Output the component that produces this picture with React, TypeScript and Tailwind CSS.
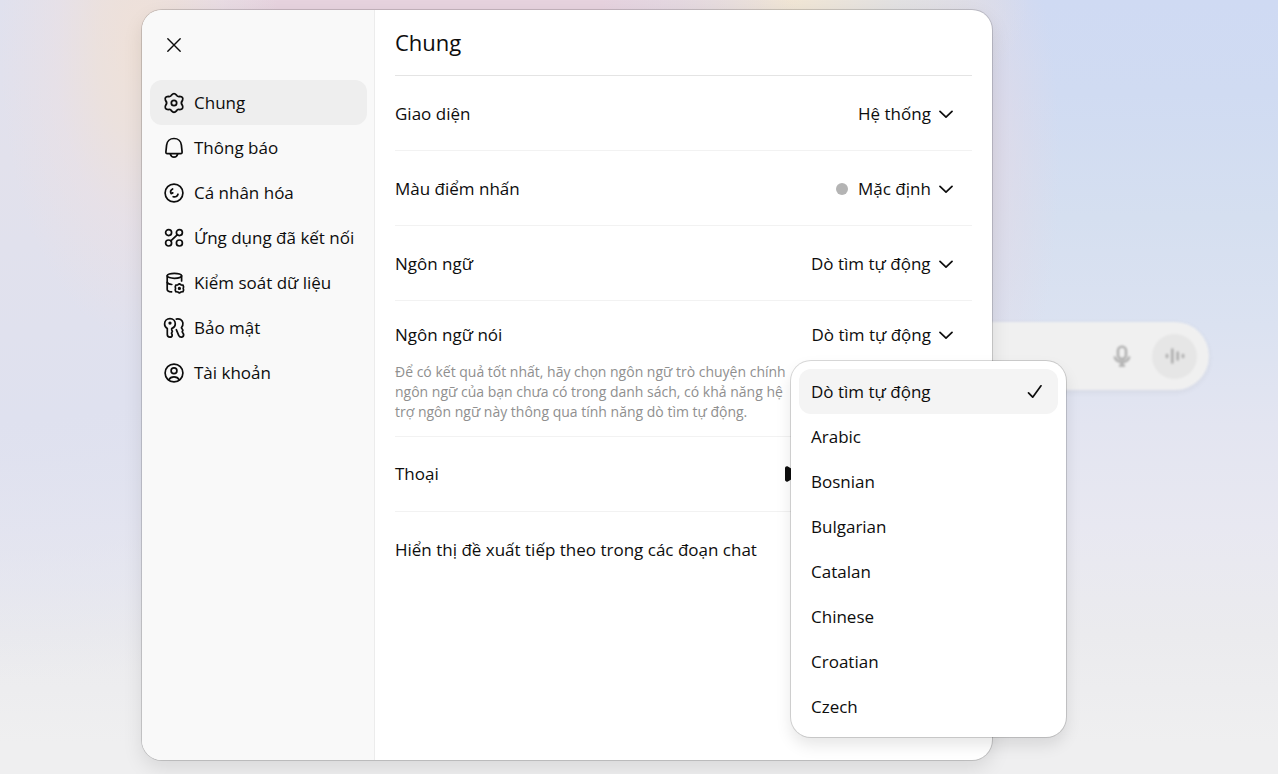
import { useState } from 'react';
import type { ReactNode } from 'react';

interface IconProps {
  children: ReactNode;
  viewBox?: string;
}

interface NavItem {
  id: string;
  label: string;
  icon: ReactNode;
}

interface SettingSelectProps {
  id: string;
  value: string;
}

const Icon = ({ children, viewBox = '0 0 24 24' }: IconProps) => (
  <svg
    viewBox={viewBox}
    className="h-6 w-6 shrink-0"
    fill="none"
    stroke="currentColor"
    strokeWidth="1.7"
    strokeLinecap="round"
    strokeLinejoin="round"
    aria-hidden="true"
  >
    {children}
  </svg>
);

const navItems: NavItem[] = [
  {
    id: 'general',
    label: 'Chung',
    icon: (
      <Icon viewBox="-1 -1 26 26">
        <path
          strokeWidth="1.9"
          d="M9.3 3.4Q12 .2 14.7 3.4Q15.4 5.4 18.2 4.9Q22.6 5.2 21.2 9.2Q18.7 12 21.2 14.8Q22.6 18.8 18.2 19.1Q15.4 18.6 14.7 20.6Q12 23.8 9.3 20.6Q8.6 18.6 5.8 19.1Q1.4 18.8 2.8 14.8Q5.3 12 2.8 9.2Q1.4 5.2 5.8 4.9Q8.6 5.4 9.3 3.4Z"
        />
        <circle cx="12" cy="12" r="2.9" strokeWidth="1.9" />
      </Icon>
    ),
  },
  {
    id: 'notifications',
    label: 'Thông báo',
    icon: (
      <Icon>
        <path d="M12 2.5C8 2.5 5 5.4 4.6 9.2L3.9 15.9C3.8 17 4.3 17.6 5.2 17.6H18.8C19.7 17.6 20.2 17 20.1 15.9L19.4 9.2C19 5.4 16 2.5 12 2.5Z" />
        <path d="M8.2 17.8C8.8 20 10.2 21.2 12 21.2S15.2 20 15.8 17.8" />
      </Icon>
    ),
  },
  {
    id: 'personalization',
    label: 'Cá nhân hóa',
    icon: (
      <Icon>
        <circle cx="12" cy="12" r="8.9" />
        <path d="M10.6 8C8.6 9.2 8.1 10.9 9.1 12.6L10.8 11.9" />
        <path d="M11.2 15.7C13.6 16.4 15.4 15.4 16 13.2" />
      </Icon>
    ),
  },
  {
    id: 'apps',
    label: 'Ứng dụng đã kết nối',
    icon: (
      <Icon>
        <circle cx="6.6" cy="6.6" r="3" />
        <circle cx="17.4" cy="6.6" r="3" />
        <circle cx="6.6" cy="17" r="3" />
        <circle cx="17.4" cy="17" r="3" />
        <path d="M15.2 8.8L8.8 14.8" />
      </Icon>
    ),
  },
  {
    id: 'data',
    label: 'Kiểm soát dữ liệu',
    icon: (
      <Icon>
        <ellipse cx="12.4" cy="4.8" rx="7.2" ry="2.5" />
        <path d="M5.2 4.8V18.4C5.2 19.7 7 20.6 9.6 20.9" />
        <path d="M19.6 4.8V10" />
        <path d="M5.2 11.4C5.6 12.5 7.4 13.2 9.8 13.5" />
        <path d="M17.4 12.8L19 13.8L21 14.1L21.6 15.9L21.2 17.4L21.6 18.9L21 20.7L19 21L17.4 22L15.8 21L13.8 20.7L13.2 18.9L13.6 17.4L13.2 15.9L13.8 14.1L15.8 13.8Z" />
        <circle cx="17.4" cy="17.4" r="0.8" fill="currentColor" />
      </Icon>
    ),
  },
  {
    id: 'security',
    label: 'Bảo mật',
    icon: (
      <Icon>
        <path d="M8 2.7C4.9 2.7 2.6 4.9 2.6 7.9C2.6 10 3.7 11.5 5.3 12.4V18.6C5.3 20.3 6.5 21.2 7.9 21.2C9.4 21.2 10.2 20.2 10.2 18.9L9.5 17.1L10.4 15.4L9.7 13.8V12.5C11.9 11.6 13.3 10 13.3 7.9C13.3 4.9 11 2.7 8 2.7Z" />
        <circle cx="8" cy="7.1" r="0.8" fill="currentColor" />
        <path d="M14.3 3.1C17.4 2.3 20.4 4 20.9 6.9C21.2 9 20.4 10.6 19.4 11.8L20.9 14.1L20.2 15.9L21.6 18.2C21.8 19.8 21 20.9 19.8 21.1C18.4 21.3 17.3 20.7 16.7 19.4L14.3 13.7" />
      </Icon>
    ),
  },
  {
    id: 'account',
    label: 'Tài khoản',
    icon: (
      <Icon>
        <circle cx="12" cy="12" r="8.9" />
        <circle cx="12" cy="9.8" r="2.9" />
        <path d="M6.7 18.9C7.8 16.9 9.7 15.9 12 15.9S16.2 16.9 17.3 18.9" />
      </Icon>
    ),
  },
];

const languages = ['Dò tìm tự động', 'Arabic', 'Bosnian', 'Bulgarian', 'Catalan', 'Chinese', 'Croatian', 'Czech'];

const ChevronIcon = () => (
  <svg
    viewBox="0 0 14 14"
    className="pointer-events-none h-3.5 w-3.5 shrink-0"
    fill="none"
    stroke="currentColor"
    strokeWidth="1.7"
    strokeLinecap="round"
    strokeLinejoin="round"
    aria-hidden="true"
  >
    <path d="M1 4.4L7 10.2L13 4.4" />
  </svg>
);

const SettingSelect = ({ id, value }: SettingSelectProps) => (
  <div className="relative flex h-[45px] items-center pr-[19px]">
    <select id={id} className="h-full cursor-pointer appearance-none bg-transparent pr-[22px] outline-none">
      <option>{value}</option>
    </select>
    <span className="pointer-events-none absolute right-[19px]">
      <ChevronIcon />
    </span>
  </div>
);

const App = () => {
  const [activeTab, setActiveTab] = useState('general');
  const [language, setLanguage] = useState(languages[0]);
  const [isMenuOpen, setIsMenuOpen] = useState(true);

  return (
    <div className="relative flex min-h-screen flex-col overflow-hidden bg-[#efeff1] bg-[radial-gradient(ellipse_140px_290px_at_140px_50px,#efe1d8_0%,#efe1d8c0_30%,#ece0e280_60%,#ece0e200_100%),radial-gradient(ellipse_360px_160px_at_440px_0px,#e6d2de_0%,#e6d2de_45%,#e6d2de00_100%),radial-gradient(ellipse_240px_140px_at_790px_0px,#f1e6d4_0%,#f1e6d400_100%),radial-gradient(ellipse_90px_280px_at_970px_160px,#e2dae6_0%,#e2dae600_100%),radial-gradient(ellipse_700px_520px_at_0px_160px,#e2e1ec_0%,#dfe1ef_50%,#dfe1ef00_100%),linear-gradient(180deg,#cfdaf3_0%,#d0dbf2_12%,#d5dff0_28%,#dbe2f1_42%,#e3e5f1_55%,#e8e8f1_68%,#ebebee_82%,#efeff0_96%)] pb-[14px] pl-[142px] pr-[286px] pt-2.5 font-['Open_Sans','Noto_Sans',sans-serif] text-[17px] leading-6 text-[#0d0d0d]">
      {/* Composer behind the dialog */}
      <div className="absolute right-[69px] top-[322px] flex h-[68px] w-[770px] items-center justify-end gap-[18px] rounded-full bg-[#f0f0f0] pr-3 text-[#adadad] shadow-[0_2px_6px_rgba(0,0,0,0.06)] blur-[1px]">
        <svg viewBox="0 0 24 24" className="h-6 w-6" fill="none" stroke="currentColor" strokeWidth="2.4" aria-hidden="true">
          <rect x="8" y="2.6" width="8" height="12.4" rx="4" />
          <path d="M4.5 12.5C5.5 16 8.3 18 12 18S18.5 16 19.5 12.5M12 18V22M9 21.6H15" />
        </svg>
        <div className="flex h-[45px] w-[45px] items-center justify-center rounded-full bg-[#e6e6e6]">
          <svg viewBox="0 0 24 24" className="h-6 w-6" fill="none" stroke="currentColor" strokeWidth="2.6" strokeLinecap="round" aria-hidden="true">
            <path d="M4 11V13M9.3 5.5V18.5M14.7 8.5V15.5M20 11V13" />
          </svg>
        </div>
      </div>

      {/* Settings dialog */}
      <div
        role="dialog"
        aria-labelledby="settings-title"
        className="relative flex flex-1 rounded-[20px] bg-white shadow-[0_0_0_1px_rgba(0,0,0,0.15),0_8px_20px_rgba(0,0,0,0.1)]"
      >
        <aside className="w-[233px] shrink-0 rounded-l-[20px] border-r border-[#ececec] bg-[#f9f9f9] pl-2 pr-[7px] pt-3">
          <button type="button" aria-label="Đóng" className="mb-[13px] flex h-[45px] items-center px-3">
            <Icon>
              <path d="M5.8 5.8L18.2 18.2M18.2 5.8L5.8 18.2" strokeWidth="1.4" />
            </Icon>
          </button>
          <nav>
            {navItems.map((item) => (
              <button
                key={item.id}
                type="button"
                onClick={() => setActiveTab(item.id)}
                className={`flex h-[45px] w-full items-center gap-2 whitespace-nowrap rounded-xl px-3 ${
                  activeTab === item.id ? 'bg-[#eeeeee]' : 'hover:bg-[#f1f1f1]'
                }`}
              >
                {item.icon}
                <span>{item.label}</span>
              </button>
            ))}
          </nav>
        </aside>

        <main className="min-w-0 flex-1 px-5">
          <h2 id="settings-title" className="flex h-[66px] items-center border-b border-[#e4e4e4] pb-0.5 text-[22px]">
            Chung
          </h2>

          <div className="flex h-[75px] items-center justify-between border-b border-[#f2f2f2] pt-0.5">
            <label htmlFor="theme">Giao diện</label>
            <SettingSelect id="theme" value="Hệ thống" />
          </div>

          <div className="flex h-[75px] items-center justify-between border-b border-[#f2f2f2] pt-0.5">
            <label htmlFor="accent">Màu điểm nhấn</label>
            <div className="flex items-center gap-2.5">
              <span className="h-3 w-3 rounded-full bg-[#b4b4b4]" />
              <SettingSelect id="accent" value="Mặc định" />
            </div>
          </div>

          <div className="flex h-[75px] items-center justify-between border-b border-[#f2f2f2] pt-0.5">
            <label htmlFor="language">Ngôn ngữ</label>
            <SettingSelect id="language" value="Dò tìm tự động" />
          </div>

          <div className="border-b border-[#f2f2f2] pb-3.5 pt-[11px]">
            <div className="flex items-center justify-between">
              <span id="spoken-label">Ngôn ngữ nói</span>
              <div className="relative z-10">
                <button
                  type="button"
                  aria-haspopup="listbox"
                  aria-expanded={isMenuOpen}
                  aria-labelledby="spoken-label"
                  onClick={() => setIsMenuOpen(!isMenuOpen)}
                  className="flex h-[45px] items-center gap-2 pr-[19px]"
                >
                  {language}
                  <ChevronIcon />
                </button>

                {isMenuOpen && (
                  <div
                    role="listbox"
                    aria-labelledby="spoken-label"
                    className="absolute -right-[94px] top-full mt-1 w-[275px] rounded-[20px] bg-white p-2 shadow-[0_0_0_1px_rgba(0,0,0,0.15),0_8px_16px_rgba(0,0,0,0.1)]"
                  >
                    {languages.map((name) => (
                      <button
                        key={name}
                        type="button"
                        role="option"
                        aria-selected={name === language}
                        onClick={() => setLanguage(name)}
                        className={`flex h-[45px] w-full items-center justify-between rounded-xl px-3 ${
                          name === language ? 'bg-[#f4f4f4]' : 'hover:bg-[#f9f9f9]'
                        }`}
                      >
                        {name}
                        {name === language && (
                          <Icon>
                            <path d="M6.5 12.8L10.7 17.2L19 5.8" />
                          </Icon>
                        )}
                      </button>
                    ))}
                  </div>
                )}
              </div>
            </div>
            <p className="mt-[5px] whitespace-nowrap text-[14px] leading-5 text-[#8f8f8f]">
              Để có kết quả tốt nhất, hãy chọn ngôn ngữ trò chuyện chính
              <br />
              ngôn ngữ của bạn chưa có trong danh sách, có khả năng hệ
              <br />
              trợ ngôn ngữ này thông qua tính năng dò tìm tự động.
            </p>
          </div>

          <div className="flex h-[75px] items-center justify-between border-b border-[#f2f2f2]">
            <span>Thoại</span>
            <div className="flex w-48 items-center">
              <button type="button" aria-label="Phát" className="px-1">
                <svg viewBox="0 0 16 18" className="h-[18px] w-4" fill="currentColor" aria-hidden="true">
                  <path d="M1 3.2C1 1.7 2.6.8 3.9 1.6L13.8 7.4C15 8.1 15 9.9 13.8 10.6L3.9 16.4C2.6 17.2 1 16.3 1 14.8Z" />
                </svg>
              </button>
            </div>
          </div>

          <div className="flex h-[75px] items-center">
            <span>Hiển thị đề xuất tiếp theo trong các đoạn chat</span>
          </div>
        </main>
      </div>
    </div>
  );
};

export default App;
